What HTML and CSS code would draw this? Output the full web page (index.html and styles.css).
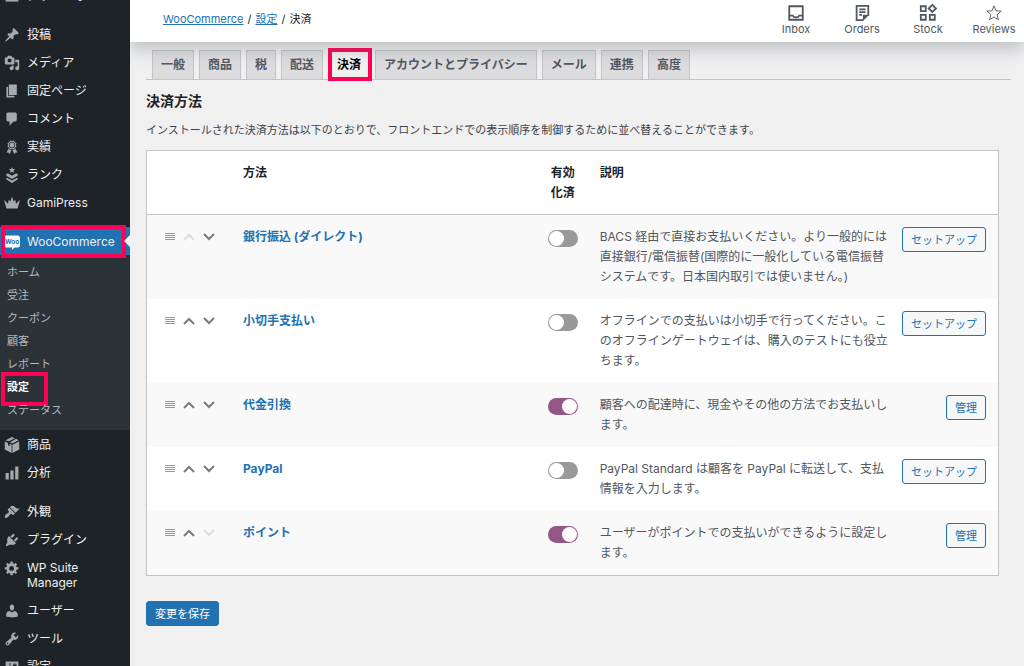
FILE: index.html
```html
<!DOCTYPE html>
<html lang="ja">
<head>
    <meta charset="UTF-8">
    <meta name="viewport" content="width=device-width, initial-scale=1.0">
    <title>WooCommerce 設定 - 決済</title>
    <link rel="stylesheet" href="styles.css">
</head>
<body>
    <nav class="sidebar">
        <ul class="menu">
            <li><a href="#"><svg viewBox="0 0 20 20"><path d="M2 3h16v14H2z"/></svg>ダッシュボード</a></li>
            <li class="separator"></li>
            <li><a href="#"><svg viewBox="0 0 20 20"><path d="M10.44 3.02l1.82-1.82 6.36 6.35-1.83 1.82c-1.05-.68-2.48-.57-3.41.36l-.75.75c-.92.93-1.04 2.35-.35 3.41l-1.83 1.82-2.41-2.41-2.8 2.79c-.42.42-3.38 2.71-3.8 2.29s1.86-3.39 2.28-3.81l2.79-2.79L4.1 9.36l1.83-1.82c1.05.69 2.48.57 3.4-.36l.75-.75c.93-.92 1.05-2.35.36-3.41z"/></svg>投稿</a></li>
            <li><a href="#"><svg viewBox="0 0 20 20"><path d="M13 11V4c0-.55-.45-1-1-1h-1.67L9 1H5L3.67 3H2c-.55 0-1 .45-1 1v7c0 .55.45 1 1 1h10c.55 0 1-.45 1-1zM7 4.5c1.38 0 2.5 1.12 2.5 2.5S8.38 9.5 7 9.5 4.5 8.38 4.5 7 5.62 4.5 7 4.5zM14 6h5v10.5c0 1.38-1.12 2.5-2.5 2.5S14 17.88 14 16.5s1.12-2.5 2.5-2.5c.17 0 .34.02.5.05V9h-3V6zm-4 8.05V13h2v3.5c0 1.38-1.12 2.5-2.5 2.5S7 17.88 7 16.5 8.12 14 9.5 14c.17 0 .34.02.5.05z"/></svg>メディア</a></li>
            <li><a href="#"><svg viewBox="0 0 20 20"><path d="M6 15V2h10v13H6zm-1 1h8v2H3V5h2v11z"/></svg>固定ページ</a></li>
            <li><a href="#"><svg viewBox="0 0 20 20"><path d="M5 2h9c1.1 0 2 .9 2 2v7c0 1.1-.9 2-2 2h-2l-5 5v-5H5c-1.1 0-2-.9-2-2V4c0-1.1.9-2 2-2z"/></svg>コメント</a></li>
            <li><a href="#"><svg viewBox="0 0 20 20"><path d="M4.46 5.16L5 7.46l-.54 2.29 2.01 1.24L7.7 13l2.3-.54 2.3.54 1.23-2.01 2.01-1.24L15 7.46l.54-2.3-2-1.24-1.24-2.01-2.3.55-2.29-.54-1.25 2zm5.55 6.34c-2.21 0-4-1.79-4-4 0-2.2 1.79-4 4-4 2.2 0 4 1.8 4 4 0 2.21-1.8 4-4 4zm-.02-1C8.33 10.5 7 9.16 7 7.5c0-1.65 1.33-3 2.99-3S13 5.85 13 7.5c0 1.66-1.35 3-3.01 3zm3.84 1.1l-1.28 2.24-2.08-.47L13 19.2l1.4-2.2h2.5zm-7.7.07l1.25 2.25 2.13-.51L7 19.2 5.6 17H3.1z"/></svg>実績</a></li>
            <li><a href="#"><svg viewBox="0 0 20 20"><path d="M10 0l1.1 2.6 2.9.2-2.2 1.9.7 2.8L10 6 7.500 7.500l.7-2.8L6 2.800l2.900-.2zM3 8l3 .5 4 2.500 4-2.500 3-.5v3l-7 4-7-4zM3 13l7 4 7-4v2.500L10 20l-7-4.500z"/></svg>ランク</a></li>
            <li><a href="#"><svg viewBox="0 0 20 20"><path d="M0 6l5 5 1-5 2 2 2-6 2 6 2-2 1 5 5-5-3 11H3z"/></svg>GamiPress</a></li>
            <li class="separator"></li>
            <li class="current">
                <a href="#"><svg viewBox="0 0 20 20"><path d="M3 2h14a3 3 0 0 1 3 3v9a3 3 0 0 1-3 3h-4l-3 3v-3H3a3 3 0 0 1-3-3V5a3 3 0 0 1 3-3z"/><text x="10" y="12" text-anchor="middle">Woo</text></svg>WooCommerce</a>
                <span class="mark mark-menu"></span>
            </li>
        </ul>
        <ul class="submenu">
            <li><a href="#">ホーム</a></li>
            <li><a href="#">受注</a></li>
            <li><a href="#">クーポン</a></li>
            <li><a href="#">顧客</a></li>
            <li><a href="#">レポート</a></li>
            <li class="selected"><a href="#">設定</a><span class="mark mark-sub"></span></li>
            <li><a href="#">ステータス</a></li>
        </ul>
        <ul class="menu-bottom">
            <li><a href="#"><svg viewBox="0 0 20 20"><path d="M10 0l3.500 1.600-7.500 3.800L2 4zM15 2.300L18.500 4 10 8 7.500 6.500zM1 5.500l4 2v3l2 .8V8.500l2.500 1.200V20L1 15.500zM19 5.500v10L10.500 20V9.700z"/></svg>商品</a></li>
            <li><a href="#"><svg viewBox="0 0 20 20"><path d="M18 18V2h-4v16h4zm-6 0V7H8v11h4zm-6 0v-8H2v8h4z"/></svg>分析</a></li>
            <li class="separator"></li>
            <li><a href="#"><svg viewBox="0 0 20 20"><path d="M14.48 11.06L7.41 3.990l1.500-1.500c.5-.56 2.300-.47 3.510.32 1.210.8 1.430 1.280 2.910 2.100 1.180.64 2.450 1.260 4.450.85zm-.71.71L6.700 4.700 4.930 6.470c-.39.39-.39 1.020 0 1.410l1.060 1.060c.39.39.39 1.030 0 1.420-.6.6-1.430 1.110-2.210 1.690-.35.26-.7.53-1.010.84C1.430 14.230.4 16.080 1.400 17.070c.99 1 2.840-.03 4.180-1.360.31-.31.58-.66.85-1.020.57-.78 1.080-1.610 1.690-2.210.39-.39 1.020-.39 1.410 0l1.060 1.060c.39.39 1.020.39 1.410 0z"/></svg>外観</a></li>
            <li><a href="#"><svg viewBox="0 0 20 20"><path d="M13.11 4.36L9.87 7.6 8 5.73l3.24-3.24c.35-.34 1.05-.2 1.56.32.52.51.66 1.21.31 1.55zm-8 1.77l.91-1.12 9.01 9.01-1.19.84c-.71.71-2.63 1.16-3.82 1.16H6.14L4.9 17.26c-.59.59-1.54.59-2.12 0-.59-.58-.59-1.53 0-2.12l1.24-1.24v-3.88c0-1.13.4-3.19 1.09-3.89zm7.26 3.97l3.24-3.24c.34-.35 1.04-.21 1.55.31.52.51.66 1.21.31 1.55l-3.24 3.25z"/></svg>プラグイン</a></li>
            <li><a href="#"><svg viewBox="0 0 20 20"><path d="M18 12h-2.18c-.17.7-.44 1.35-.81 1.93l1.54 1.54-2.1 2.1-1.54-1.54c-.58.36-1.23.63-1.91.79V19H8v-2.18c-.68-.16-1.33-.43-1.91-.79l-1.54 1.54-2.12-2.12 1.54-1.54c-.36-.58-.63-1.23-.79-1.91H1V9.03h2.17c.16-.7.44-1.35.8-1.94L2.43 5.55l2.1-2.1 1.54 1.54c.58-.37 1.24-.64 1.93-.81V2h3v2.18c.68.16 1.33.43 1.91.79l1.54-1.54 2.12 2.12-1.54 1.54c.36.59.64 1.24.8 1.94H18V12zm-8.5 1.5c1.66 0 3-1.34 3-3s-1.34-3-3-3-3 1.34-3 3 1.34 3 3 3z"/></svg>WP Suite Manager</a></li>
            <li><a href="#"><svg viewBox="0 0 20 20"><path d="M10 9.25c-2.27 0-2.73-3.44-2.73-3.44C7 4.02 7.82 2 9.97 2c2.16 0 2.98 2.02 2.71 3.81 0 0-.41 3.44-2.68 3.44zm0 2.57L12.72 10c2.39 0 4.52 2.33 4.52 4.53v2.49s-3.65 1.13-7.24 1.13c-3.65 0-7.24-1.13-7.24-1.13v-2.49c0-2.25 1.94-4.48 4.47-4.48z"/></svg>ユーザー</a></li>
            <li><a href="#"><svg viewBox="0 0 20 20"><path d="M16.68 9.77c-1.34 1.34-3.3 1.67-4.95.99l-5.41 6.52c-.99.99-2.59.99-3.58 0s-.99-2.59 0-3.57l6.52-5.42c-.68-1.65-.35-3.61.99-4.95 1.28-1.28 3.12-1.62 4.72-1.06l-2.89 2.89 2.82 2.82 2.86-2.87c.53 1.58.18 3.39-1.08 4.65zM3.81 16.21c.4.39 1.04.39 1.43 0 .4-.4.4-1.04 0-1.43-.39-.4-1.03-.4-1.43 0-.39.39-.39 1.03 0 1.43z"/></svg>ツール</a></li>
            <li><a href="#"><svg viewBox="0 0 20 20"><path d="M18 16V4c0-.55-.45-1-1-1H3c-.55 0-1 .45-1 1v12c0 .55.45 1 1 1h14c.55 0 1-.45 1-1zM8 11h1c.55 0 1 .45 1 1s-.45 1-1 1H8v1.500c0 .28-.22.5-.5.5s-.5-.22-.5-.5V13H6c-.55 0-1-.45-1-1s.45-1 1-1h1V5.500c0-.28.22-.5.5-.5s.5.22.5.5V11zm5-2h-1c-.55 0-1-.45-1-1s.45-1 1-1h1V5.500c0-.28.22-.5.5-.5s.5.22.5.5V7h1c.55 0 1 .45 1 1s-.45 1-1 1h-1v5.500c0 .28-.22.5-.5.5s-.5-.22-.5-.5V9z"/></svg>設定</a></li>
        </ul>
    </nav>

    <div class="page">
        <header class="header">
            <div class="breadcrumb">
                <a href="#">WooCommerce</a><span>/</span><a href="#">設定</a><span>/</span>決済
            </div>
            <div class="activity">
                <button type="button"><svg viewBox="0 0 20 20"><path d="M2.500 2.500h15v15h-15zM2.500 13h4c.8 2.400 6.200 2.400 7 0h4"/></svg>Inbox</button>
                <button type="button"><svg viewBox="0 0 20 20"><path d="M11.500 18H4V2h13v11M7 6h7M7 9h7M7 12h3"/><path class="solid" d="M11 12h7l-7 7z"/></svg>Orders</button>
                <button type="button"><svg viewBox="0 0 20 20"><path d="M2 2.500h5.500V8H2zM2 12h5.500v5.500H2zM12 12h5.500v5.500H12zM14.800 1l4 4-4 4-4-4z"/></svg>Stock</button>
                <button type="button"><svg viewBox="0 0 20 20"><path class="thin" d="M10 2l2.200 5.500 5.800.4-4.500 3.800 1.400 5.800L10 14.400 5.100 17.500l1.400-5.800L2 7.900l5.800-.4z"/></svg>Reviews</button>
            </div>
        </header>

        <main class="content">
            <nav class="tabs">
                <a href="#">一般</a>
                <a href="#">商品</a>
                <a href="#">税</a>
                <a href="#">配送</a>
                <a href="#" class="active">決済<span class="mark mark-tab"></span></a>
                <a href="#">アカウントとプライバシー</a>
                <a href="#">メール</a>
                <a href="#">連携</a>
                <a href="#">高度</a>
            </nav>

            <form class="settings">
                <h2>決済方法</h2>
                <p>インストールされた決済方法は以下のとおりで、フロントエンドでの表示順序を制御するために並べ替えることができます。</p>
                <table class="gateways">
                    <thead>
                        <tr>
                            <th class="sort"></th>
                            <th class="name">方法</th>
                            <th class="status">有効化済</th>
                            <th class="description">説明</th>
                            <th class="action"></th>
                        </tr>
                    </thead>
                    <tbody>
                        <tr>
                            <td class="sort"><div class="sort-tools">
                                <svg class="handle" viewBox="0 0 10 8"><path d="M0 .5h10M0 2.500h10M0 4.500h10M0 6.500h10"/></svg>
                                <button type="button" aria-label="上へ移動" disabled><svg viewBox="0 0 12 8"><path d="M1 7l5-5 5 5"/></svg></button>
                                <button type="button" aria-label="下へ移動"><svg viewBox="0 0 12 8"><path d="M1 1l5 5 5-5"/></svg></button>
                            </div></td>
                            <td class="name"><a href="#">銀行振込 (ダイレクト)</a></td>
                            <td class="status"><input type="checkbox" class="toggle" aria-label="銀行振込を有効化"></td>
                            <td class="description">BACS 経由で直接お支払いください。より一般的には直接銀行/電信振替(国際的に一般化している電信振替システムです。日本国内取引では使いません。)</td>
                            <td class="action"><button type="button" class="button">セットアップ</button></td>
                        </tr>
                        <tr>
                            <td class="sort"><div class="sort-tools">
                                <svg class="handle" viewBox="0 0 10 8"><path d="M0 .5h10M0 2.500h10M0 4.500h10M0 6.500h10"/></svg>
                                <button type="button" aria-label="上へ移動"><svg viewBox="0 0 12 8"><path d="M1 7l5-5 5 5"/></svg></button>
                                <button type="button" aria-label="下へ移動"><svg viewBox="0 0 12 8"><path d="M1 1l5 5 5-5"/></svg></button>
                            </div></td>
                            <td class="name"><a href="#">小切手支払い</a></td>
                            <td class="status"><input type="checkbox" class="toggle" aria-label="小切手支払いを有効化"></td>
                            <td class="description">オフラインでの支払いは小切手で行ってください。このオフラインゲートウェイは、購入のテストにも役立ちます。</td>
                            <td class="action"><button type="button" class="button">セットアップ</button></td>
                        </tr>
                        <tr>
                            <td class="sort"><div class="sort-tools">
                                <svg class="handle" viewBox="0 0 10 8"><path d="M0 .5h10M0 2.500h10M0 4.500h10M0 6.500h10"/></svg>
                                <button type="button" aria-label="上へ移動"><svg viewBox="0 0 12 8"><path d="M1 7l5-5 5 5"/></svg></button>
                                <button type="button" aria-label="下へ移動"><svg viewBox="0 0 12 8"><path d="M1 1l5 5 5-5"/></svg></button>
                            </div></td>
                            <td class="name"><a href="#">代金引換</a></td>
                            <td class="status"><input type="checkbox" class="toggle" aria-label="代金引換を有効化" checked></td>
                            <td class="description">顧客への配達時に、現金やその他の方法でお支払いします。</td>
                            <td class="action"><button type="button" class="button">管理</button></td>
                        </tr>
                        <tr>
                            <td class="sort"><div class="sort-tools">
                                <svg class="handle" viewBox="0 0 10 8"><path d="M0 .5h10M0 2.500h10M0 4.500h10M0 6.500h10"/></svg>
                                <button type="button" aria-label="上へ移動"><svg viewBox="0 0 12 8"><path d="M1 7l5-5 5 5"/></svg></button>
                                <button type="button" aria-label="下へ移動"><svg viewBox="0 0 12 8"><path d="M1 1l5 5 5-5"/></svg></button>
                            </div></td>
                            <td class="name"><a href="#">PayPal</a></td>
                            <td class="status"><input type="checkbox" class="toggle" aria-label="PayPalを有効化"></td>
                            <td class="description">PayPal Standard は顧客を PayPal に転送して、支払情報を入力します。</td>
                            <td class="action"><button type="button" class="button">セットアップ</button></td>
                        </tr>
                        <tr>
                            <td class="sort"><div class="sort-tools">
                                <svg class="handle" viewBox="0 0 10 8"><path d="M0 .5h10M0 2.500h10M0 4.500h10M0 6.500h10"/></svg>
                                <button type="button" aria-label="上へ移動"><svg viewBox="0 0 12 8"><path d="M1 7l5-5 5 5"/></svg></button>
                                <button type="button" aria-label="下へ移動" disabled><svg viewBox="0 0 12 8"><path d="M1 1l5 5 5-5"/></svg></button>
                            </div></td>
                            <td class="name"><a href="#">ポイント</a></td>
                            <td class="status"><input type="checkbox" class="toggle" aria-label="ポイントを有効化" checked></td>
                            <td class="description">ユーザーがポイントでの支払いができるように設定します。</td>
                            <td class="action"><button type="button" class="button">管理</button></td>
                        </tr>
                    </tbody>
                </table>
                <button type="submit" class="button button-primary">変更を保存</button>
            </form>
        </main>
    </div>
</body>
</html>
```

FILE: styles.css
```css
* {
    box-sizing: border-box;
}
body {
    display: flex;
    height: 100vh;
    margin: 0;
    overflow: hidden;
    background-color: #f0f0f1;
    color: #3c434a;
    font-family: Inter, "Noto Sans CJK JP", sans-serif;
    font-size: 12px;
    line-height: 20px;
}
button {
    font-family: inherit;
    cursor: pointer;
}
a {
    color: #2271b1;
}

/* 注目枠 */
.mark {
    position: absolute;
    border: 4px solid #ff0055;
    pointer-events: none;
}

/* サイドバー */
.sidebar {
    position: relative;
    z-index: 2;
    flex: 0 0 130px;
    min-width: 0;
    background-color: #1d2327;
}
.sidebar ul {
    list-style: none;
    margin: 0;
    padding: 0;
}
.sidebar .menu {
    margin-top: -19px;
}
.sidebar a {
    display: flex;
    gap: 7px;
    padding: 7px 12px 6px 4px;
    color: #f0f0f1;
    line-height: 15px;
    text-decoration: none;
}
.sidebar svg {
    flex: none;
    width: 16px;
    height: 16px;
    margin-bottom: -1px;
    fill: #a7aaad;
}
.separator {
    height: 11px;
}
.current {
    position: relative;
    background-color: #2271b1;
}
.current::after {
    content: "";
    position: absolute;
    top: 8px;
    right: 0;
    border: 6px solid transparent;
    border-left-width: 0;
    border-right-color: #f0f0f1;
}
.sidebar .current svg {
    fill: #fff;
}
.current text {
    fill: #2271b1;
    font-size: 8px;
    font-weight: bold;
}
.mark-menu {
    top: -2px;
    right: 4px;
    bottom: -3px;
    left: 1px;
}
.sidebar .submenu {
    padding: 6px 0 8px;
    background-color: #2c3338;
}
.submenu li {
    position: relative;
}
.sidebar .submenu a {
    padding: 4px 7px;
    color: #b4b9be;
    font-size: 11px;
}
.sidebar .submenu .selected a {
    color: #fff;
    font-weight: bold;
}
.mark-sub {
    top: -4px;
    left: 1px;
    width: 47px;
    height: 34px;
}

/* ヘッダー */
.page {
    flex: 1;
    min-width: 0;
}
.header {
    position: relative;
    z-index: 1;
    display: flex;
    justify-content: space-between;
    height: 42px;
    padding-left: 33px;
    background-color: #fff;
    box-shadow: 0 8px 16px rgba(85, 93, 102, 0.3);
    font-size: 11px;
}
.breadcrumb {
    padding-top: 9px;
    color: #1d2327;
}
.breadcrumb span {
    margin: 0 4px;
}
.activity {
    display: flex;
    gap: 6px;
}
.activity button {
    display: flex;
    flex-direction: column;
    align-items: center;
    width: 60px;
    padding: 4px 0 0;
    border: 0;
    background: none;
    color: #50575e;
    font-size: 11px;
    line-height: 14px;
}
.activity svg {
    width: 18px;
    height: 18px;
    fill: none;
    stroke: #50575e;
    stroke-width: 2;
}
.activity .solid {
    fill: #50575e;
    stroke: none;
}
.activity .thin {
    stroke-width: 1;
}

/* タブ */
.content {
    padding: 8px 13px 0 16px;
}
.tabs {
    display: flex;
    gap: 5px;
    padding-left: 6px;
    border-bottom: 1px solid #c3c4c7;
}
.tabs a {
    padding: 4px 8px;
    border: 1px solid #c3c4c7;
    border-bottom: 0;
    background-color: #dcdcde;
    color: #50575e;
    font-weight: bold;
    text-decoration: none;
    white-space: nowrap;
}
.tabs .active {
    position: relative;
    background-color: #f0f0f1;
    color: #000;
}
.mark-tab {
    top: -3px;
    right: -3px;
    bottom: -2px;
    left: -1px;
}

/* 決済方法 */
.settings {
    margin-right: 12px;
}
h2 {
    margin: 11px 0 9px;
    color: #1d2327;
    font-size: 14px;
    line-height: 20px;
}
p {
    margin: 0 0 10px;
    font-size: 11px;
}
.gateways {
    width: 100%;
    margin-bottom: 25px;
    border: 1px solid #c3c4c7;
    border-spacing: 0;
    background-color: #fff;
    table-layout: fixed;
}
.gateways th,
.gateways td {
    padding: 12px;
    text-align: left;
    vertical-align: top;
}
.gateways th,
.gateways th.status {
    padding-bottom: 11px;
    border-bottom: 1px solid #c3c4c7;
    color: #1d2327;
}
.gateways tbody tr:nth-child(odd) {
    background-color: #f9f9f9;
}
.gateways .sort {
    width: 84px;
}
.gateways .status {
    width: 50px;
    padding-right: 10px;
    padding-left: 10px;
    text-align: center;
}
.gateways .description {
    width: 36%;
    padding-right: 0;
}
.gateways td.description {
    color: #50575e;
}
.gateways .action {
    width: 104px;
    padding-left: 0;
    text-align: right;
}
.gateways .name a {
    font-weight: bold;
    text-decoration: none;
}
.sort-tools {
    display: flex;
    align-items: center;
    gap: 8px;
    height: 20px;
    padding-left: 6px;
}
.sort-tools svg {
    display: block;
    flex: none;
    width: 12px;
    height: 8px;
    fill: none;
    stroke: #787c82;
    stroke-width: 2;
}
.sort-tools .handle {
    width: 10px;
    stroke: #999;
    stroke-width: 1;
}
.sort-tools button {
    padding: 0;
    border: 0;
    background: none;
}
.sort-tools button:disabled svg {
    stroke: #dcdcde;
}
.toggle {
    display: block;
    width: 30px;
    height: 17px;
    margin: 3px 0 0;
    padding: 1px;
    border-radius: 9px;
    background-color: #999;
    appearance: none;
    cursor: pointer;
}
.toggle::before {
    content: "";
    display: block;
    width: 15px;
    height: 15px;
    border-radius: 50%;
    background-color: #fff;
}
.toggle:checked {
    background-color: #935687;
}
.toggle:checked::before {
    margin-left: auto;
}
.button {
    height: 25px;
    padding: 0 8px;
    border: 1px solid #2271b1;
    border-radius: 3px;
    background-color: #f6f7f7;
    color: #2271b1;
    font-size: 11px;
    line-height: 20px;
    white-space: nowrap;
}
.gateways .button {
    display: block;
    margin-left: auto;
}
.button-primary {
    background-color: #2271b1;
    color: #fff;
}
```
